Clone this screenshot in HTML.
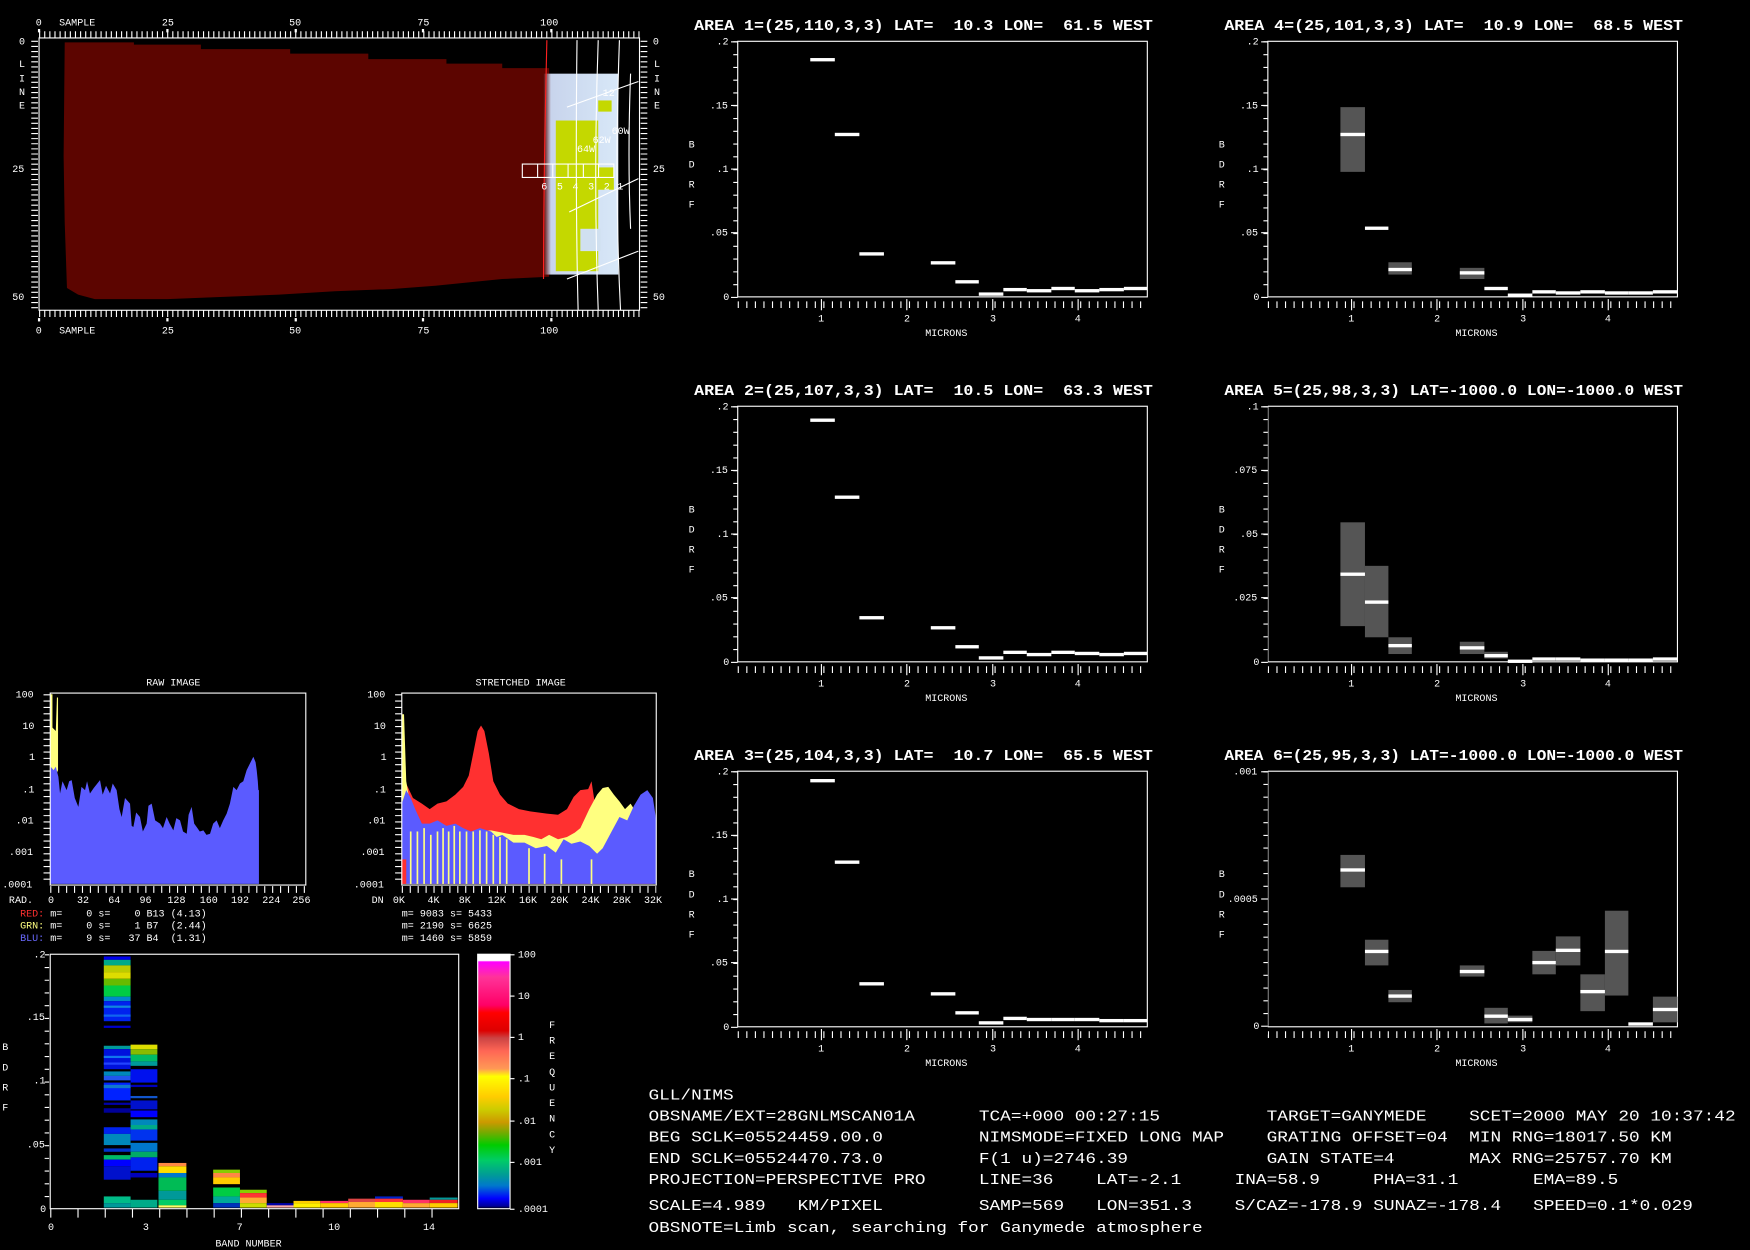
<!DOCTYPE html>
<html><head><meta charset="utf-8">
<style>
html,body{margin:0;padding:0;background:#000;}
svg{display:block;}
text{font-family:"Liberation Mono","DejaVu Sans Mono",monospace;fill:#fff;white-space:pre;}
.t{font-size:13px;font-weight:bold;}
.a{font-size:9px;}
.b{font-size:13px;}
</style></head><body>
<svg width="1750" height="1250" viewBox="0 0 1568 1120" xmlns="http://www.w3.org/2000/svg" xmlns:xlink="http://www.w3.org/1999/xlink">
<defs>
<linearGradient id="cb" x1="0" y1="0" x2="0" y2="1">
<stop offset="0" stop-color="#fff"/><stop offset="0.025" stop-color="#fff"/>
<stop offset="0.03" stop-color="#ff00ff"/><stop offset="0.09" stop-color="#ff3399"/>
<stop offset="0.2" stop-color="#ff0066"/><stop offset="0.23" stop-color="#ff0000"/>
<stop offset="0.3" stop-color="#dd0000"/><stop offset="0.33" stop-color="#cc4444"/>
<stop offset="0.38" stop-color="#ff6655"/><stop offset="0.45" stop-color="#ff9955"/>
<stop offset="0.48" stop-color="#ffff00"/><stop offset="0.56" stop-color="#ffcc00"/>
<stop offset="0.61" stop-color="#cccc00"/><stop offset="0.66" stop-color="#cc9900"/>
<stop offset="0.7" stop-color="#77aa00"/><stop offset="0.75" stop-color="#00cc00"/>
<stop offset="0.81" stop-color="#00cc66"/><stop offset="0.87" stop-color="#009999"/>
<stop offset="0.91" stop-color="#0077cc"/><stop offset="0.96" stop-color="#0000ff"/>
<stop offset="0.99" stop-color="#000099"/><stop offset="1" stop-color="#000"/>
</linearGradient>
<linearGradient id="lb" x1="0" y1="0" x2="1" y2="0">
<stop offset="0" stop-color="#5a0400"/>
<stop offset="0.1" stop-color="#c8d4ec"/>
<stop offset="1" stop-color="#d8e8f8"/>
</linearGradient>
</defs>
<rect width="1568" height="1120" fill="#000"/>

<!-- ========== IMAGE PANEL ========== -->
<polygon fill="#5c0500" points="58,38 120,38 120,40 180,40 180,44 260,44 260,48 330,48 330,53 400,53 400,57 450,57 450,61 492,61 492,248 450,250 420,253 390,256 350,259 300,261 250,264 200,266 150,268 85,268 70,264 60,258 58,200 57,140"/>
<rect x="487" y="66" width="67" height="180" fill="url(#lb)"/>
<rect x="498" y="108" width="38" height="135" fill="#c4d800"/>
<rect x="515" y="150" width="35" height="20" fill="#c4d800"/>
<rect x="520" y="205" width="18" height="20" fill="#d0e0f0"/>
<rect x="536" y="90" width="12" height="10" fill="#c4d800"/>
<path d="M490,36 C488,120 487,200 487,250" stroke="#ff2020" stroke-width="1" fill="none"/>
<g stroke="#fff" stroke-width="1" fill="none">
<path d="M517,36 C516,120 516,200 518,278"/>
<path d="M536,36 C533,120 533,200 536,278"/>
<path d="M555,36 C552,120 552,200 556,278"/>
<path d="M565,66 C563,120 563,160 565,205"/>
<line x1="508" y1="96" x2="572" y2="73"/>
<line x1="510" y1="190" x2="572" y2="160"/>
<line x1="508" y1="250" x2="572" y2="225"/>
<rect x="468" y="147" width="82" height="12"/>
<line x1="481.7" y1="147" x2="481.7" y2="159"/><line x1="495.3" y1="147" x2="495.3" y2="159"/>
<line x1="509" y1="147" x2="509" y2="159"/><line x1="522.7" y1="147" x2="522.7" y2="159"/>
<line x1="536.3" y1="147" x2="536.3" y2="159"/>
</g>
<text class="a" x="485" y="170">6</text><text class="a" x="499" y="170">5</text><text class="a" x="513" y="170">4</text><text class="a" x="527" y="170">3</text><text class="a" x="541" y="170">2</text><text class="a" x="553" y="170">1</text>
<text class="a" x="517" y="136">64W</text><text class="a" x="531" y="128">62W</text><text class="a" x="548" y="120">60W</text><text class="a" x="540" y="86">12</text>
<rect x="35" y="34" width="538" height="244" fill="none" stroke="#fff" stroke-width="1"/>
<line x1="35" y1="31" x2="573" y2="31" stroke="#fff" stroke-width="6" stroke-dasharray="1 3.59"/>
<line x1="35" y1="281" x2="573" y2="281" stroke="#fff" stroke-width="6" stroke-dasharray="1 3.59"/>
<line x1="31" y1="36.5" x2="31" y2="278" stroke="#fff" stroke-width="6" stroke-dasharray="1 3.59"/>
<line x1="577" y1="36.5" x2="577" y2="278" stroke="#fff" stroke-width="6" stroke-dasharray="1 3.59"/>
<g fill="#fff">
<rect x="34" y="26" width="2" height="3"/><rect x="149" y="26" width="2" height="3"/><rect x="264" y="26" width="2" height="3"/><rect x="378" y="26" width="2" height="3"/><rect x="493" y="26" width="2" height="3"/>
<rect x="34" y="285" width="2" height="3"/><rect x="149" y="285" width="2" height="3"/><rect x="264" y="285" width="2" height="3"/><rect x="378" y="285" width="2" height="3"/><rect x="493" y="285" width="2" height="3"/>
</g>
<text class="a" x="32" y="23">0</text><text class="a" x="53" y="23">SAMPLE</text><text class="a" x="145" y="23">25</text><text class="a" x="259" y="23">50</text><text class="a" x="374" y="23">75</text><text class="a" x="484" y="23">100</text>
<text class="a" x="32" y="299">0</text><text class="a" x="53" y="299">SAMPLE</text><text class="a" x="145" y="299">25</text><text class="a" x="259" y="299">50</text><text class="a" x="374" y="299">75</text><text class="a" x="484" y="299">100</text>
<text class="a" x="17" y="40">0</text><text class="a" x="11" y="154">25</text><text class="a" x="11" y="269">50</text>
<text class="a" x="17" y="60">L</text><text class="a" x="17" y="73">I</text><text class="a" x="17" y="85">N</text><text class="a" x="17" y="97">E</text>
<text class="a" x="585" y="40">0</text><text class="a" x="585" y="154">25</text><text class="a" x="585" y="269">50</text>
<text class="a" x="586" y="60">L</text><text class="a" x="586" y="73">I</text><text class="a" x="586" y="85">N</text><text class="a" x="586" y="97">E</text>

<!-- ========== SPECTRUM PLOTS ========== -->
<g id="sp1">
<text class="t" x="622" y="27" textLength="411" lengthAdjust="spacingAndGlyphs">AREA 1=(25,110,3,3) LAT=  10.3 LON=  61.5 WEST</text>
<rect x="661" y="37" width="367" height="229" fill="none" stroke="#fff"/>
<line x1="659" y1="37" x2="659" y2="266" stroke="#fff" stroke-width="4" stroke-dasharray="1 10.45"/>
<line x1="661" y1="273" x2="1028" y2="273" stroke="#fff" stroke-width="6" stroke-dasharray="1 6.67"/>
<g fill="#fff"><rect x="735.5" y="268" width="1" height="10"/><rect x="812" y="268" width="1" height="10"/><rect x="889" y="268" width="1" height="10"/><rect x="965.5" y="268" width="1" height="10"/><rect x="655" y="37" width="6" height="1"/><rect x="655" y="94" width="6" height="1"/><rect x="655" y="151" width="6" height="1"/><rect x="655" y="208" width="6" height="1"/><rect x="655" y="266" width="6" height="1"/></g>
<text class="a" x="642" y="40">.2</text><text class="a" x="636" y="97">.15</text><text class="a" x="642" y="154">.1</text><text class="a" x="636" y="211">.05</text><text class="a" x="648" y="269">0</text>
<text class="a" x="617" y="132">B</text><text class="a" x="617" y="150">D</text><text class="a" x="617" y="168">R</text><text class="a" x="617" y="186">F</text>
<text class="a" x="733" y="288">1</text><text class="a" x="810" y="288">2</text><text class="a" x="887" y="288">3</text><text class="a" x="963" y="288">4</text>
<text class="a" x="829" y="301">MICRONS</text>
</g>
<g fill="#fff">
<rect x="726" y="52" width="22" height="3"/><rect x="748" y="119" width="22" height="3"/><rect x="770" y="226" width="22" height="3"/><rect x="834" y="234" width="22" height="3"/><rect x="856" y="251" width="21" height="3"/><rect x="877" y="262" width="22" height="3"/><rect x="899" y="258" width="21" height="3"/><rect x="920" y="259" width="22" height="3"/><rect x="942" y="257" width="21" height="3"/><rect x="963" y="259" width="22" height="3"/><rect x="985" y="258" width="22" height="3"/><rect x="1007" y="257" width="21" height="3"/>
</g>

<g transform="translate(0,327)"><use href="#sp1" xlink:href="#sp1"/></g>
<rect x="620" y="340" width="420" height="16" fill="#000"/>
<text class="t" x="622" y="354" textLength="411" lengthAdjust="spacingAndGlyphs">AREA 2=(25,107,3,3) LAT=  10.5 LON=  63.3 WEST</text>
<g fill="#fff">
<rect x="726" y="375" width="22" height="3"/><rect x="748" y="444" width="22" height="3"/><rect x="770" y="552" width="22" height="3"/><rect x="834" y="561" width="22" height="3"/><rect x="856" y="578" width="21" height="3"/><rect x="877" y="588" width="22" height="3"/><rect x="899" y="583" width="21" height="3"/><rect x="920" y="585" width="22" height="3"/><rect x="942" y="583" width="21" height="3"/><rect x="963" y="584" width="22" height="3"/><rect x="985" y="585" width="22" height="3"/><rect x="1007" y="584" width="21" height="3"/>
</g>

<g transform="translate(0,654)"><use href="#sp1" xlink:href="#sp1"/></g>
<rect x="620" y="667" width="420" height="16" fill="#000"/>
<text class="t" x="622" y="681" textLength="411" lengthAdjust="spacingAndGlyphs">AREA 3=(25,104,3,3) LAT=  10.7 LON=  65.5 WEST</text>
<g fill="#fff">
<rect x="726" y="698" width="22" height="3"/><rect x="748" y="771" width="22" height="3"/><rect x="770" y="880" width="22" height="3"/><rect x="834" y="889" width="22" height="3"/><rect x="856" y="906" width="21" height="3"/><rect x="877" y="915" width="22" height="3"/><rect x="899" y="911" width="21" height="3"/><rect x="920" y="912" width="22" height="3"/><rect x="942" y="912" width="21" height="3"/><rect x="963" y="912" width="22" height="3"/><rect x="985" y="913" width="22" height="3"/><rect x="1007" y="913" width="21" height="3"/>
</g>

<!-- Column B -->
<g transform="translate(475,0)"><use href="#sp1" xlink:href="#sp1"/></g>
<rect x="1095" y="12" width="430" height="18" fill="#000"/>
<text class="t" x="1097" y="27" textLength="411" lengthAdjust="spacingAndGlyphs">AREA 4=(25,101,3,3) LAT=  10.9 LON=  68.5 WEST</text>
<g fill="#555"><rect x="1201" y="96" width="22" height="58"/><rect x="1244" y="235" width="21" height="11"/><rect x="1308" y="240" width="22" height="10"/></g>
<g fill="#fff">
<rect x="1201" y="119" width="22" height="3"/><rect x="1223" y="203" width="21" height="3"/><rect x="1244" y="240" width="21" height="3"/><rect x="1308" y="243" width="22" height="3"/><rect x="1330" y="257" width="21" height="3"/><rect x="1351" y="263" width="22" height="3"/><rect x="1373" y="260" width="21" height="3"/><rect x="1394" y="261" width="22" height="3"/><rect x="1416" y="260" width="22" height="3"/><rect x="1438" y="261" width="21" height="3"/><rect x="1459" y="261" width="22" height="3"/><rect x="1481" y="260" width="22" height="3"/>
</g>

<g transform="translate(475,327)"><use href="#sp1" xlink:href="#sp1"/></g>
<rect x="1095" y="339" width="430" height="18" fill="#000"/>
<rect x="1100" y="360" width="36" height="240" fill="#000"/>
<text class="t" x="1097" y="354" textLength="411" lengthAdjust="spacingAndGlyphs">AREA 5=(25,98,3,3) LAT=-1000.0 LON=-1000.0 WEST</text>
<text class="a" x="1117" y="367">.1</text><text class="a" x="1105" y="424">.075</text><text class="a" x="1111" y="481">.05</text><text class="a" x="1105" y="538">.025</text><text class="a" x="1123" y="596">0</text>
<g fill="#fff"><rect x="1130" y="364" width="6" height="1"/><rect x="1130" y="421" width="6" height="1"/><rect x="1130" y="478" width="6" height="1"/><rect x="1130" y="535" width="6" height="1"/><rect x="1130" y="593" width="6" height="1"/></g>
<line x1="1134" y1="364" x2="1134" y2="593" stroke="#fff" stroke-width="4" stroke-dasharray="1 10.45"/>
<g fill="#555"><rect x="1201" y="468" width="22" height="93"/><rect x="1223" y="507" width="21" height="64"/><rect x="1244" y="571" width="21" height="15"/><rect x="1308" y="575" width="22" height="11"/><rect x="1330" y="584" width="21" height="6"/></g>
<g fill="#fff">
<rect x="1201" y="513" width="22" height="3"/><rect x="1223" y="538" width="21" height="3"/><rect x="1244" y="577" width="21" height="3"/><rect x="1308" y="579" width="22" height="3"/><rect x="1330" y="586" width="21" height="3"/><rect x="1351" y="591" width="22" height="3"/><rect x="1373" y="589" width="21" height="3"/><rect x="1394" y="589" width="22" height="3"/><rect x="1416" y="590" width="22" height="3"/><rect x="1438" y="590" width="21" height="3"/><rect x="1459" y="590" width="22" height="3"/><rect x="1481" y="589" width="22" height="3"/>
</g>

<g transform="translate(475,654)"><use href="#sp1" xlink:href="#sp1"/></g>
<rect x="1095" y="666" width="430" height="18" fill="#000"/>
<rect x="1100" y="687" width="36" height="240" fill="#000"/>
<text class="t" x="1097" y="681" textLength="411" lengthAdjust="spacingAndGlyphs">AREA 6=(25,95,3,3) LAT=-1000.0 LON=-1000.0 WEST</text>
<text class="a" x="1105" y="694">.001</text><text class="a" x="1100" y="808">.0005</text><text class="a" x="1123" y="922">0</text>
<g fill="#fff"><rect x="1130" y="691" width="6" height="1"/><rect x="1130" y="805" width="6" height="1"/><rect x="1130" y="919" width="6" height="1"/></g>
<line x1="1134" y1="691" x2="1134" y2="919" stroke="#fff" stroke-width="4" stroke-dasharray="1 10.4"/>
<g fill="#555"><rect x="1201" y="766" width="22" height="29"/><rect x="1223" y="842" width="21" height="23"/><rect x="1244" y="887" width="21" height="11"/><rect x="1308" y="865" width="22" height="10"/><rect x="1330" y="903" width="21" height="14"/><rect x="1351" y="910" width="22" height="6"/><rect x="1373" y="852" width="21" height="21"/><rect x="1394" y="839" width="22" height="26"/><rect x="1416" y="873" width="22" height="33"/><rect x="1438" y="816" width="21" height="76"/><rect x="1481" y="893" width="22" height="23"/></g>
<g fill="#fff">
<rect x="1201" y="778" width="22" height="3"/><rect x="1223" y="851" width="21" height="3"/><rect x="1244" y="891" width="21" height="3"/><rect x="1308" y="869" width="22" height="3"/><rect x="1330" y="909" width="21" height="3"/><rect x="1351" y="912" width="22" height="3"/><rect x="1373" y="861" width="21" height="3"/><rect x="1394" y="850" width="22" height="3"/><rect x="1416" y="887" width="22" height="3"/><rect x="1438" y="851" width="21" height="3"/><rect x="1459" y="916" width="22" height="3"/><rect x="1481" y="903" width="22" height="3"/>
</g>

<!-- ========== RAW HISTOGRAM ========== -->
<text class="a" x="131" y="614">RAW IMAGE</text>
<polygon fill="#ffff80" points="45,622 47,622 47,652 50,655 51,625 52,625 52,690 50,695 45,700"/>
<polygon fill="#5b5bff" points="45.4,687 48,690 50,687 52.3,696 53.8,711 56,700 59.7,708 62,700 64.2,699 67,715 70.2,723 73,705 76.2,708 78,700 80.6,711 84,706 89.6,699 92,712 95,704 98.6,711 101,702 104.5,708 107,725 109,732 112,715 116.5,720 118,740 119.5,741 122,728 125.4,732 128,745 131.4,738 133,722 135.9,720 139,735 143.4,738 146,742 149.3,732 152,738 155.3,744 158,733 161.3,735 164,745 167.3,747 169,730 171.7,723 174,738 176.2,741 179,745 182.2,744 185,748 188.2,747 191,738 194.1,735 197,742 200,735 203.1,729 206,720 209.1,705 212,708 215,702 218,700 221,690 224,684 227,678 229,683 230,690 231,700 231.5,708 232,708 232,792 45,792"/>
<rect x="45" y="621" width="229" height="172" fill="none" stroke="#fff"/>
<line x1="42" y1="622" x2="42" y2="792" stroke="#fff" stroke-width="6" stroke-dasharray="1 4.7"/>
<line x1="45" y1="797" x2="274" y2="797" stroke="#fff" stroke-width="6" stroke-dasharray="1 6.1"/>
<text class="a" x="14" y="625">100</text><text class="a" x="20" y="653">10</text><text class="a" x="26" y="681">1</text><text class="a" x="20" y="710">.1</text><text class="a" x="14" y="738">.01</text><text class="a" x="8" y="766">.001</text><text class="a" x="2" y="795">.0001</text>
<text class="a" x="8" y="809">RAD.</text><text class="a" x="43" y="809">0</text><text class="a" x="69" y="809">32</text><text class="a" x="97" y="809">64</text><text class="a" x="125" y="809">96</text><text class="a" x="150" y="809">128</text><text class="a" x="179" y="809">160</text><text class="a" x="207" y="809">192</text><text class="a" x="235" y="809">224</text><text class="a" x="262" y="809">256</text>
<text class="a" x="18" y="821"><tspan fill="#ff3030">RED:</tspan> m=    0 s=    0 B13 (4.13)</text>
<text class="a" x="18" y="832"><tspan fill="#ffff80">GRN:</tspan> m=    0 s=    1 B7  (2.44)</text>
<text class="a" x="18" y="843"><tspan fill="#6a6aff">BLU:</tspan> m=    9 s=   37 B4  (1.31)</text>

<!-- ========== STRETCHED HISTOGRAM ========== -->
<text class="a" x="426" y="614">STRETCHED IMAGE</text>
<polygon fill="#ff3030" points="360,640 363,700 370,715 378,720 385,725 392,720 400,718 408,712 415,705 420,695 424,675 428,655 431,650 434,655 438,675 442,700 448,712 455,720 465,725 475,727 490,729 500,730 508,725 514,714 520,708 527,707 530,700 533,720 540,735 548,745 552,760 557,775 585,775 585,792 360,792"/>
<polygon fill="#ffff80" points="360,640 362,640 364,700 370,735 380,742 390,744 400,742 410,744 420,746 430,745 440,744 450,746 460,748 470,748 478,750 485,752 492,748 500,752 508,750 515,746 520,742 528,725 535,712 540,706 545,705 550,712 555,718 560,725 565,720 570,728 575,745 580,760 583,790 360,792"/>
<polygon fill="#5b5bff" points="360,720 364,708 368,715 372,725 378,738 385,738 392,735 400,740 408,738 415,742 422,745 430,742 440,745 445,750 450,748 460,755 470,755 480,760 490,758 498,764 505,752 512,756 520,754 528,758 535,765 540,760 548,745 555,732 562,735 568,722 574,712 580,708 585,715 588,735 588,792 360,792"/>
<g stroke="#ffff80" stroke-width="1.5">
<line x1="368" y1="745" x2="368" y2="792"/><line x1="374" y1="745" x2="374" y2="792"/><line x1="380" y1="742" x2="380" y2="792"/><line x1="386" y1="748" x2="386" y2="792"/><line x1="392" y1="745" x2="392" y2="792"/><line x1="397" y1="742" x2="397" y2="792"/><line x1="402" y1="745" x2="402" y2="792"/><line x1="407" y1="740" x2="407" y2="792"/><line x1="412" y1="745" x2="412" y2="792"/><line x1="418" y1="745" x2="418" y2="792"/><line x1="424" y1="745" x2="424" y2="792"/><line x1="430" y1="744" x2="430" y2="792"/><line x1="436" y1="745" x2="436" y2="792"/><line x1="442" y1="748" x2="442" y2="792"/><line x1="448" y1="750" x2="448" y2="792"/><line x1="454" y1="752" x2="454" y2="792"/>
<line x1="474" y1="760" x2="474" y2="792"/><line x1="488" y1="765" x2="488" y2="792"/><line x1="503" y1="770" x2="503" y2="792"/><line x1="530" y1="770" x2="530" y2="792"/>
</g>
<rect x="360" y="770" width="4" height="22" fill="#ff3030"/>
<rect x="360" y="621" width="228" height="172" fill="none" stroke="#fff"/>
<line x1="357" y1="622" x2="357" y2="792" stroke="#fff" stroke-width="6" stroke-dasharray="1 4.7"/>
<line x1="360" y1="797" x2="588" y2="797" stroke="#fff" stroke-width="6" stroke-dasharray="1 6.1"/>
<text class="a" x="329" y="625">100</text><text class="a" x="335" y="653">10</text><text class="a" x="341" y="681">1</text><text class="a" x="335" y="710">.1</text><text class="a" x="329" y="738">.01</text><text class="a" x="323" y="766">.001</text><text class="a" x="317" y="795">.0001</text>
<text class="a" x="333" y="809">DN</text><text class="a" x="352" y="809">0K</text><text class="a" x="383" y="809">4K</text><text class="a" x="411" y="809">8K</text><text class="a" x="437" y="809">12K</text><text class="a" x="465" y="809">16K</text><text class="a" x="493" y="809">20K</text><text class="a" x="521" y="809">24K</text><text class="a" x="549" y="809">28K</text><text class="a" x="577" y="809">32K</text>
<text class="a" x="360" y="821">m= 9083 s= 5433</text>
<text class="a" x="360" y="832">m= 2190 s= 6625</text>
<text class="a" x="360" y="843">m= 1460 s= 5859</text>

<!-- ========== DENSITY PLOT ========== -->
<rect x="93" y="857" width="24" height="3" fill="#0000ee"/>
<rect x="93" y="860" width="24" height="5" fill="#00aa88"/>
<rect x="93" y="865" width="24" height="6" fill="#bbcc00"/>
<rect x="93" y="871" width="24" height="6" fill="#dddd00"/>
<rect x="93" y="877" width="24" height="6" fill="#66bb00"/>
<rect x="93" y="883" width="24" height="10" fill="#00cc44"/>
<rect x="93" y="893" width="24" height="4" fill="#0088cc"/>
<rect x="93" y="897" width="24" height="18" fill="#0022ee"/>
<rect x="93" y="901" width="24" height="2" fill="#1188dd"/>
<rect x="93" y="909" width="24" height="2" fill="#1166ee"/>
<rect x="93" y="919" width="24" height="2" fill="#0000cc"/>
<rect x="93" y="937" width="24" height="3" fill="#009999"/>
<rect x="93" y="940" width="24" height="18" fill="#0011dd"/>
<rect x="93" y="946" width="24" height="2" fill="#1177ee"/>
<rect x="93" y="952" width="24" height="2" fill="#2244ff"/>
<rect x="93" y="960" width="24" height="4" fill="#0088bb"/>
<rect x="93" y="964" width="24" height="4" fill="#2255ee"/>
<rect x="93" y="970" width="24" height="16" fill="#0022ff"/>
<rect x="93" y="972" width="24" height="3" fill="#1177cc"/>
<rect x="93" y="988" width="24" height="2" fill="#0000aa"/>
<rect x="93" y="993" width="24" height="4" fill="#000099"/>
<rect x="93" y="1010" width="24" height="6" fill="#0022ee"/>
<rect x="93" y="1016" width="24" height="10" fill="#0088bb"/>
<rect x="93" y="1029" width="24" height="3" fill="#0033cc"/>
<rect x="93" y="1035" width="24" height="4" fill="#00bb66"/>
<rect x="93" y="1039" width="24" height="6" fill="#0000ff"/>
<rect x="93" y="1045" width="24" height="12" fill="#0011cc"/>
<rect x="93" y="1072" width="24" height="6" fill="#00bb88"/>
<rect x="93" y="1078" width="24" height="4" fill="#009999"/>
<rect x="117" y="936" width="24" height="4" fill="#dddd00"/>
<rect x="117" y="940" width="24" height="5" fill="#88bb00"/>
<rect x="117" y="945" width="24" height="6" fill="#00bb66"/>
<rect x="117" y="951" width="24" height="4" fill="#009999"/>
<rect x="117" y="958" width="24" height="12" fill="#0011ee"/>
<rect x="117" y="972" width="24" height="2" fill="#0000bb"/>
<rect x="117" y="982" width="24" height="2" fill="#1155cc"/>
<rect x="117" y="986" width="24" height="8" fill="#0011cc"/>
<rect x="117" y="995" width="24" height="6" fill="#0000ff"/>
<rect x="117" y="1003" width="24" height="5" fill="#0088bb"/>
<rect x="117" y="1008" width="24" height="4" fill="#00aa88"/>
<rect x="117" y="1012" width="24" height="10" fill="#0033ee"/>
<rect x="117" y="1024" width="24" height="8" fill="#0077cc"/>
<rect x="117" y="1032" width="24" height="5" fill="#00aa66"/>
<rect x="117" y="1037" width="24" height="12" fill="#0022ee"/>
<rect x="117" y="1051" width="24" height="4" fill="#0000bb"/>
<rect x="117" y="1075" width="24" height="7" fill="#00aa88"/>
<rect x="142" y="1042" width="25" height="3" fill="#ff8844"/>
<rect x="142" y="1045" width="25" height="6" fill="#ffdd00"/>
<rect x="142" y="1051" width="25" height="4" fill="#0077cc"/>
<rect x="142" y="1055" width="25" height="12" fill="#00bb55"/>
<rect x="142" y="1067" width="25" height="8" fill="#009999"/>
<rect x="142" y="1075" width="25" height="5" fill="#00cc66"/>
<rect x="142" y="1080" width="25" height="2" fill="#ffff66"/>
<rect x="191" y="1048" width="24" height="3" fill="#88cc00"/>
<rect x="191" y="1051" width="24" height="4" fill="#ff8844"/>
<rect x="191" y="1055" width="24" height="6" fill="#ffcc00"/>
<rect x="191" y="1064" width="24" height="8" fill="#00cc44"/>
<rect x="191" y="1072" width="24" height="6" fill="#00aa99"/>
<rect x="191" y="1078" width="24" height="4" fill="#0033bb"/>
<rect x="215" y="1066" width="24" height="3" fill="#88cc00"/>
<rect x="215" y="1069" width="24" height="4" fill="#ff3333"/>
<rect x="215" y="1073" width="24" height="5" fill="#ffaa33"/>
<rect x="215" y="1078" width="24" height="4" fill="#ccdd00"/>
<rect x="239" y="1078" width="24" height="2" fill="#0000aa"/>
<rect x="239" y="1080" width="24" height="2" fill="#ffaaaa"/>
<rect x="263" y="1076" width="24" height="2" fill="#ffcc00"/><rect x="263" y="1078" width="24" height="4" fill="#ffee00"/>
<rect x="287" y="1076" width="25" height="2" fill="#ff3366"/><rect x="287" y="1078" width="25" height="4" fill="#ffcc00"/>
<rect x="312" y="1074" width="24" height="3" fill="#dd4444"/><rect x="312" y="1077" width="24" height="5" fill="#ffaa33"/>
<rect x="336" y="1072" width="25" height="2" fill="#0022cc"/><rect x="336" y="1074" width="25" height="3" fill="#ff3333"/><rect x="336" y="1077" width="25" height="5" fill="#ffdd00"/>
<rect x="361" y="1075" width="24" height="3" fill="#ff3366"/><rect x="361" y="1078" width="24" height="4" fill="#ffaa33"/>
<rect x="385" y="1073" width="25" height="2" fill="#009999"/><rect x="385" y="1075" width="25" height="3" fill="#ee2222"/><rect x="385" y="1078" width="25" height="4" fill="#ffcc00"/>
<rect x="45" y="855" width="366" height="228" fill="none" stroke="#fff"/>
<line x1="42" y1="855" x2="42" y2="1083" stroke="#fff" stroke-width="4" stroke-dasharray="1 10.4"/>
<line x1="45" y1="1087" x2="411" y2="1087" stroke="#fff" stroke-width="8" stroke-dasharray="1 23.4"/>
<text class="a" x="30" y="858">.2</text><text class="a" x="24" y="914">.15</text><text class="a" x="30" y="971">.1</text><text class="a" x="24" y="1028">.05</text><text class="a" x="36" y="1086">0</text>
<text class="a" x="2" y="941">B</text><text class="a" x="2" y="959">D</text><text class="a" x="2" y="977">R</text><text class="a" x="2" y="995">F</text>
<text class="a" x="43" y="1102">0</text><text class="a" x="128" y="1102">3</text><text class="a" x="212" y="1102">7</text><text class="a" x="294" y="1102">10</text><text class="a" x="379" y="1102">14</text>
<text class="a" x="193" y="1117">BAND NUMBER</text>
<rect x="428" y="855" width="29" height="228" fill="url(#cb)" stroke="#fff"/>
<g fill="#fff"><rect x="457" y="855" width="4" height="1"/><rect x="457" y="892" width="4" height="1"/><rect x="457" y="929" width="4" height="1"/><rect x="457" y="966" width="4" height="1"/><rect x="457" y="1004" width="4" height="1"/><rect x="457" y="1041" width="4" height="1"/><rect x="457" y="1083" width="4" height="1"/></g>
<text class="a" x="464" y="858">100</text><text class="a" x="464" y="895">10</text><text class="a" x="464" y="932">1</text><text class="a" x="464" y="969">.1</text><text class="a" x="464" y="1007">.01</text><text class="a" x="464" y="1044">.001</text><text class="a" x="464" y="1086">.0001</text>
<text class="a" x="492" y="921">F</text><text class="a" x="492" y="935">R</text><text class="a" x="492" y="949">E</text><text class="a" x="492" y="963">Q</text><text class="a" x="492" y="977">U</text><text class="a" x="492" y="991">E</text><text class="a" x="492" y="1005">N</text><text class="a" x="492" y="1019">C</text><text class="a" x="492" y="1033">Y</text>

<!-- ========== INFO TEXT ========== -->
<text class="b" x="581" y="985" textLength="76.4" lengthAdjust="spacingAndGlyphs">GLL/NIMS</text>
<text class="b" x="581" y="1004" textLength="974.1" lengthAdjust="spacingAndGlyphs">OBSNAME/EXT=28GNLMSCAN01A      TCA=+000 00:27:15          TARGET=GANYMEDE    SCET=2000 MAY 20 10:37:42</text>
<text class="b" x="581" y="1023" textLength="916.8" lengthAdjust="spacingAndGlyphs">BEG SCLK=05524459.00.0         NIMSMODE=FIXED LONG MAP    GRATING OFFSET=04  MIN RNG=18017.50 KM</text>
<text class="b" x="581" y="1042" textLength="916.8" lengthAdjust="spacingAndGlyphs">END SCLK=05524470.73.0         F(1 u)=2746.39             GAIN STATE=4       MAX RNG=25757.70 KM</text>
<text class="b" x="581" y="1061" textLength="869" lengthAdjust="spacingAndGlyphs">PROJECTION=PERSPECTIVE PRO     LINE=36    LAT=-2.1     INA=58.9     PHA=31.1       EMA=89.5</text>
<text class="b" x="581" y="1084" textLength="935.9" lengthAdjust="spacingAndGlyphs">SCALE=4.989   KM/PIXEL         SAMP=569   LON=351.3    S/CAZ=-178.9 SUNAZ=-178.4   SPEED=0.1*0.029</text>
<text class="b" x="581" y="1104" textLength="496.6" lengthAdjust="spacingAndGlyphs">OBSNOTE=Limb scan, searching for Ganymede atmosphere</text>
</svg>
</body></html>
